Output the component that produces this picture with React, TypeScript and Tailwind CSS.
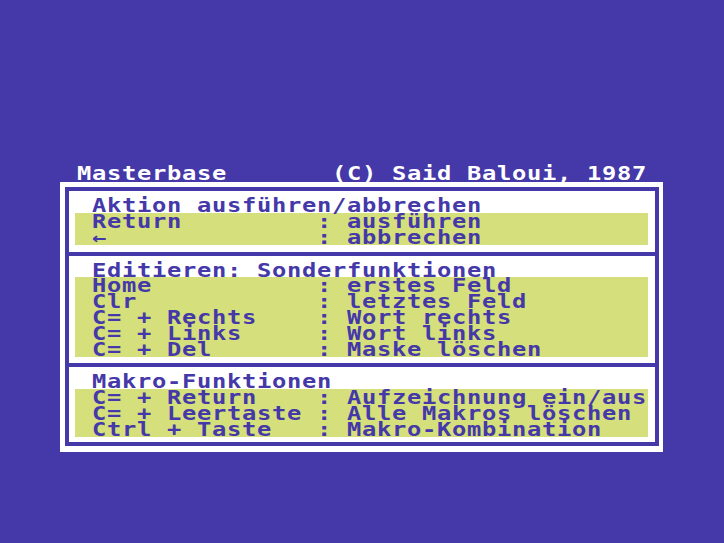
const rows1 = [
  ['Return', 'ausführen'],
  ['←', 'abbrechen'],
];

const rows2 = [
  ['Home', 'erstes Feld'],
  ['Clr', 'letztes Feld'],
  ['C= + Rechts', 'Wort rechts'],
  ['C= + Links', 'Wort links'],
  ['C= + Del', 'Maske löschen'],
];

const rows3 = [
  ['C= + Return', 'Aufzeichnung ein/aus'],
  ['C= + Leertaste', 'Alle Makros löschen'],
  ['Ctrl + Taste', 'Makro-Kombination'],
];

// one C64 text line: 15px per character cell, 16px per row
function Line({ text }: { text: string }) {
  return (
    <div className="h-[16px] leading-[16px] whitespace-pre origin-left scale-x-125 tracking-[0.56px]">
      {text}
    </div>
  );
}

function KeyRows({ rows }: { rows: string[][] }) {
  return (
    <div className="ml-[6px] mr-[7px] bg-[#d5df7c] pl-[17px]">
      {rows.map(([key, action]) => (
        <Line key={key} text={key.padEnd(15, ' ') + ': ' + action} />
      ))}
    </div>
  );
}

export default function App() {
  return (
    <div className="w-[724px] h-[543px] overflow-hidden bg-[#4538a8] pt-[165px] font-['DejaVu_Sans_Mono',monospace] text-[19px] font-bold text-[#4538a8]">
      <div className="pl-[77px] text-white">
        <Line text={'Masterbase       (C) Said Baloui, 1987'} />
      </div>

      <div className="ml-[60px] mt-[1px] w-[603px] bg-white pt-[5px] pl-[5px] pr-[4px] pb-[6px]">
        <div className="border-4 border-[#4538a8] bg-white">
          <div className="pt-[6px] pb-[7px]">
            <div className="pl-[23px]">
              <Line text="Aktion ausführen/abbrechen" />
            </div>
            <KeyRows rows={rows1} />
          </div>

          <div className="border-t-4 border-[#4538a8] pt-[6px] pb-[6px]">
            <div className="pl-[23px] h-[15px]">
              <Line text="Editieren: Sonderfunktionen" />
            </div>
            <KeyRows rows={rows2} />
          </div>

          <div className="border-t-4 border-[#4538a8] pt-[6px] pb-[5px]">
            <div className="pl-[23px]">
              <Line text="Makro-Funktionen" />
            </div>
            <KeyRows rows={rows3} />
          </div>
        </div>
      </div>
    </div>
  );
}
